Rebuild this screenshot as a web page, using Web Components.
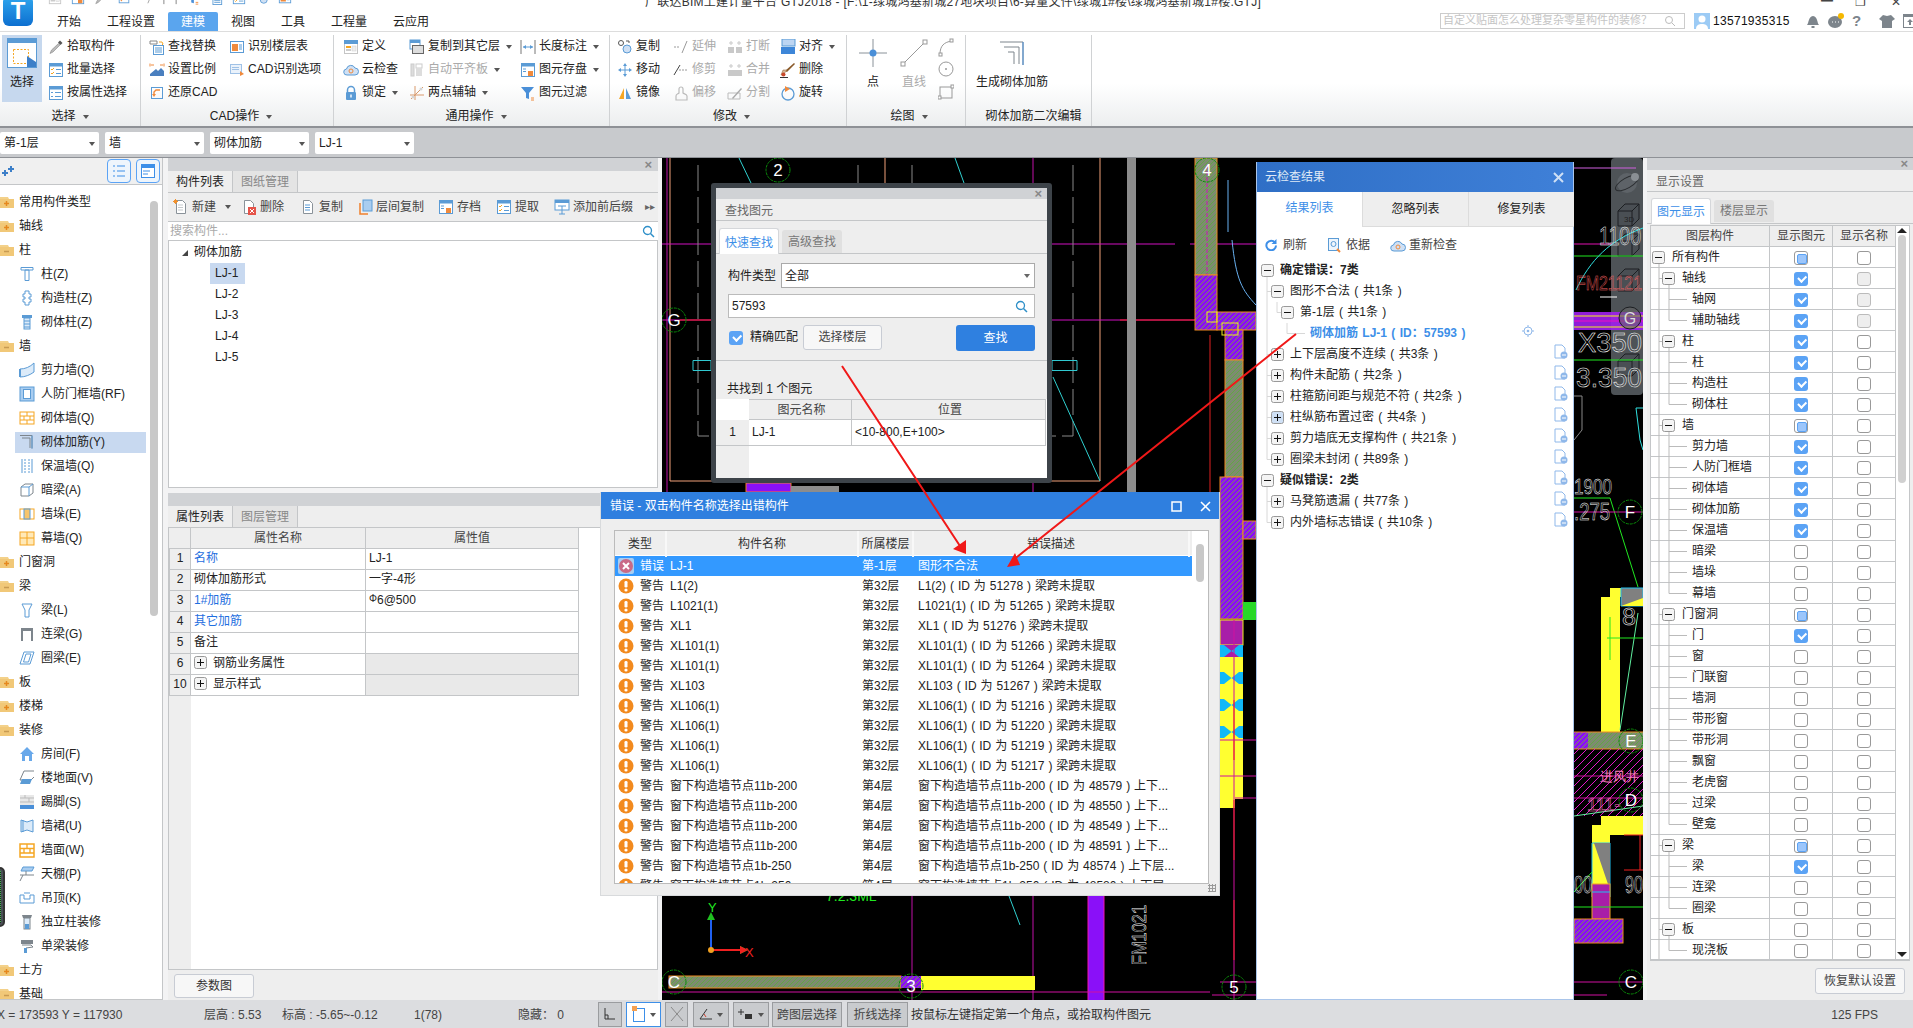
<!DOCTYPE html>
<html lang="zh">
<head>
<meta charset="utf-8">
<title>GTJ2018</title>
<style>
  html, body { margin: 0; height: 100%; overflow: hidden; background: #f3f3f4; }
  body { position: relative; font: 12px/1.2 "Liberation Sans", "Noto Sans CJK SC", sans-serif; color: #222; }
</style>
</head>
<body>
<gtj-app>
  <gtj-titlebar></gtj-titlebar>
  <gtj-ribbon></gtj-ribbon>
  <gtj-combos></gtj-combos>
  <gtj-main>
    <gtj-nav-tree></gtj-nav-tree>
    <gtj-mid-panel></gtj-mid-panel>
    <gtj-cad-view></gtj-cad-view>
    <gtj-display-panel></gtj-display-panel>
  </gtj-main>
  <gtj-status></gtj-status>
</gtj-app>
<gtj-find-dialog></gtj-find-dialog>
<gtj-cloud-panel></gtj-cloud-panel>
<gtj-error-dialog></gtj-error-dialog>
<gtj-arrows></gtj-arrows>

<script>
const B = '#5b9bd5', O = '#f5a623', G = '#9a9a9a';
const win = `<rect x="1.5" y="1.5" width="13" height="13" fill="#fff" stroke="${B}"/><rect x="1" y="1" width="14" height="3.5" fill="${B}"/>`;
const page = `<path d="M3.5 1.500h6l3 3v10h-9z" fill="#fff" stroke="#8a9299"/>`;
const I = {
  pick: `<path d="M12 1.5l2.5 2.5-2 2L10 3.5z" fill="#555"/><path d="M10.5 4.5l1.5 1.5L5 13l-3 1.5L3.5 11z" fill="#bbb" stroke="#777" stroke-width=".5"/>`,
  batch: `${win}<path d="M3 7l1 1 2-2M3 11l1 1 2-2" stroke="${O}" fill="none"/><path d="M8 7.5h5M8 11.5h5" stroke="${B}"/>`,
  attr: `${win}<path d="M3 7.5h2M7 7.5h6M3 11.5h2M7 11.5h6" stroke="${B}"/>`,
  find: `<path d="M1 2h7v3H1z" fill="#fff" stroke="#888"/><path d="M10 3h3l1 2-1 1" stroke="${O}" fill="none"/><rect x="4.5" y="6.5" width="10" height="9" fill="#fff" stroke="${B}"/><path d="M6 9h7M6 11h7M6 13h7" stroke="${B}"/>`,
  floor: `<rect x="1.5" y="2.5" width="13" height="11" fill="#fff" stroke="${B}"/><rect x="3" y="5" width="6" height="7" fill="#f08a3c"/><path d="M10 6h3M10 8h3M10 10h3" stroke="${B}"/>`,
  scale: `<path d="M1 14h14V9l-3-3-3 3-2-2-6 5z" fill="#4a7fbf"/><path d="M2 3h3M1 1.5v3M14 3h-3M15 1.5v3" stroke="#f08a3c"/>`,
  cadopt: `<rect x="1.5" y="2.5" width="11" height="9" fill="#eaf2fb" stroke="#9fc1e6"/><path d="M3 5.5h7M3 7.5h7" stroke="#9fc1e6"/><path d="M11 9l4 3-4 2z" fill="#f08a3c"/>`,
  restore: `<rect x="2.5" y="2.5" width="11" height="11" fill="none" stroke="${B}"/><path d="M11 5H7L5 7v3" stroke="#f08a3c" stroke-width="1.4" fill="none"/><path d="M3 9l2 3 2-3z" fill="#f08a3c"/>`,
  def: `<rect x="1.5" y="1.5" width="13" height="13" fill="#fff" stroke="#c5c5c5"/><rect x="1" y="1" width="14" height="4" fill="${B}"/><rect x="3" y="7" width="5" height="2" fill="${O}"/><rect x="3" y="10" width="5" height="2" fill="#ccc"/><rect x="9" y="7" width="4" height="5" fill="#eee" stroke="#ccc" stroke-width=".5"/>`,
  cloud: `<path d="M4 13a3 3 0 0 1-.5-6A4.500 4.500 0 0 1 12 6a3.500 3.500 0 0 1 0 7z" fill="#cfe0f4" stroke="${B}"/><circle cx="8" cy="9" r="2" fill="none" stroke="#f08a3c"/>`,
  lock: `<path d="M4.500 7V5a3.500 3.500 0 0 1 7 0v2" fill="none" stroke="${B}" stroke-width="1.500"/><rect x="3" y="7" width="10" height="8" rx="1" fill="${B}"/><rect x="7.300" y="9.500" width="1.400" height="3" fill="#fff"/>`,
  copyf: `<rect x="1" y="1" width="10" height="9" fill="#fff" stroke="${B}"/><rect x="1" y="1" width="10" height="3" fill="${B}"/><rect x="3.500" y="6.500" width="11" height="8" fill="#ddd" stroke="#666"/>`,
  align: `<rect x="2" y="2" width="3" height="12" fill="#ddd" stroke="#ccc"/><rect x="7" y="2" width="6" height="4" fill="none" stroke="#ccc"/><rect x="7" y="6" width="6" height="8" fill="#ddd"/>`,
  twop: `<path d="M2 14L14 2M6 1v14M1 10h14" stroke="#d99a6c" fill="none"/><circle cx="4" cy="12" r="1.500" fill="#d5d5d5"/><circle cx="12" cy="4" r="1.500" fill="#d5d5d5"/>`,
  dim: `<path d="M1 1v14M15 1v14" stroke="#777"/><path d="M3 8h10" stroke="${B}"/><path d="M3 8l3-2v4zM13 8l-3-2v4z" fill="${B}"/>`,
  save: `<rect x="1.500" y="1.500" width="13" height="13" fill="#fff" stroke="${B}"/><rect x="1" y="1" width="14" height="3.500" fill="${B}"/><path d="M3 7h3M3 9.500h3" stroke="${B}"/><rect x="8" y="9" width="5" height="5" fill="#f08a3c"/>`,
  filter: `<path d="M1 2h13l-5 6v6l-3-1V8z" fill="#4a8fd8"/><path d="M11 13h3M11 15h3" stroke="#f08a3c"/>`,
  copy: `<circle cx="4" cy="4" r="2.500" fill="none" stroke="#555"/><circle cx="10" cy="10" r="4" fill="#cfe0f4" stroke="${B}"/><path d="M9 2h3v2" stroke="#555" fill="none"/>`,
  move: `<path d="M8 1l2 3H6zM8 15l-2-3h4zM1 8l3-2v4zM15 8l-3 2V6z" fill="${B}"/><path d="M8 4v8M4 8h8" stroke="${B}"/>`,
  mirror: `<path d="M7 3v11H2z" fill="${O}"/><path d="M9 3v11h5z" fill="${B}"/>`,
  ext: `<path d="M1 8h6" stroke="${G}" stroke-dasharray="2 1"/><path d="M9 14l5-12" stroke="${G}"/>`,
  trim: `<path d="M1 13L7 3" stroke="#444"/><path d="M6 8h9" stroke="${G}" stroke-dasharray="2 1"/>`,
  off: `<path d="M3 15v-4c0-2 2-2 3-3V4a2 2 0 0 1 4 0v4c1 1 4 1 4 3v4z" fill="none" stroke="#bbb" stroke-width="1.200"/>`,
  brk: `<rect x="1" y="8" width="6" height="6" fill="#c9c9c9"/><rect x="9" y="8" width="6" height="6" fill="#c9c9c9"/><path d="M4 2v4M2 4h4M12 2v4M10 4h4" stroke="#c9c9c9"/>`,
  merge: `<rect x="1" y="8" width="14" height="6" fill="#c9c9c9"/><path d="M4 2v4M2 4h4M12 2v4M10 4h4" stroke="#c9c9c9"/>`,
  split: `<path d="M1 8h12v6H1z" fill="none" stroke="#bbb"/><path d="M5 13L14 3l1 1-9 10z" fill="#aaa"/>`,
  alignr: `<rect x="2" y="0" width="13" height="7" fill="#bcd5f2" stroke="${B}"/><rect x="1" y="8" width="14" height="7" fill="#3d86d8"/>`,
  del: `<path d="M14 1l1 1-8 8-2-1z" fill="#8a5a2a"/><path d="M7 8L3 13h-2l2-5z" fill="#d7b99a" stroke="#8a5a2a" stroke-width=".5"/><circle cx="3.500" cy="12.500" r="2" fill="#c9482a"/><path d="M0 15.500h8" stroke="#333"/>`,
  rot: `<circle cx="8" cy="9" r="6" fill="none" stroke="${B}" stroke-width="1.300"/><path d="M5 1l5 3-5 3z" fill="#f08a3c"/>`,
  pnew: `${page}<path d="M5 6h5M5 8.500h5M5 11h5" stroke="#c5c9cc"/><path d="M1 1l3 3M4 1L1 4M2.500 0v5M0 2.500h5" stroke="#f0902c"/>`,
  pdel: `${page}<rect x="7" y="8" width="8" height="8" fill="#e5544a"/><path d="M9 10l4 4M13 10l-4 4" stroke="#fff"/>`,
  pcopy: `${page}<path d="M5 6h5M5 8.500h5M5 11h5" stroke="${B}"/>`,
  lcopy: `<path d="M3 4v11h8" fill="none" stroke="#f0802c" stroke-width="1.500"/><rect x="6" y="1" width="9" height="11" fill="#a9cdf0" stroke="${B}"/>`,
  suffix: `<rect x="1" y="1" width="14" height="10" fill="#fff" stroke="${B}"/><rect x="1" y="1" width="14" height="3" fill="${B}"/><path d="M4 7h8M8 7v8M5 15h6" stroke="${B}"/>`
};
const ic = (n, s = 16) => `<svg width="${s}" height="${s}" viewBox="0 0 16 16" style="flex:none;display:block">${I[n] || ''}</svg>`;

const box = (x, y, plus, on) => `<rect x="${x + .5}" y="${y + .5}" width="12" height="12" rx="2" fill="${on ? '#cfe0f5' : '#f4f4f4'}" stroke="#999"/><path d="M${x + 3} ${y + 6.500}h7${plus ? `M${x + 6.500} ${y + 3}v7` : ''}" stroke="#111"/>`;

class GtjBase extends HTMLElement {
  constructor() {
    super();
    this.attachShadow({ mode: 'open' });
  }
  get css() { return ''; }
  get template() { return ''; }
  connectedCallback() {
    this.shadowRoot.innerHTML = `<style>* { box-sizing: border-box; } :host { display: block; box-sizing: border-box; flex: none; } ${GtjBase.shared} ${this.css}</style>${this.template}`;
  }
}
GtjBase.shared = `
  .strip { height: 12px; background: #d0d2d5; display: flex; justify-content: flex-end; align-items: center; padding-right: 5px; color: #888; font-size: 13px; font-weight: bold; }
  .ptitle { height: 22px; padding-left: 9px; line-height: 23px; color: #666; border-bottom: 1px solid #c4c6c8; background: #eee; }
  .tabs { display: flex; align-items: flex-end; background: #eee; border-bottom: 1px solid #c4c6c8; }
  .tab { height: 23px; width: 60px; line-height: 23px; text-align: center; color: #777; background: #e0e0e0; border-radius: 3px 3px 0 0; margin-left: 3px; }
  .tab.on { height: 26px; line-height: 26px; background: #fff; color: #3d8fe8; border: 1px solid #d5d7da; border-bottom: 0; margin-bottom: -1px; }
  .tick { width: 14px; height: 14px; border-radius: 3px; border: 1px solid #999; background: #fff; display: block; }
  .tick.c { background: #5ba3f5; border: 0; position: relative; }
  .tick.c::after { content: ""; position: absolute; left: 4px; top: 3px; width: 6px; height: 3.500px; border: solid #fff; border-width: 0 0 2px 2px; transform: rotate(-45deg); }
  .tick.p { background: #fff; padding: 2px; }
  .tick.p::after { content: ""; display: block; width: 100%; height: 100%; border-radius: 2px; background: #9cc6fb; border: 1px solid #5ba3f5; }
  .tick.d { background: #eee; border-color: #bbb; }
`;

class GtjApp extends GtjBase {
  get css() { return `:host { display: flex; flex-direction: column; height: 1028px; }`; }
  get template() { return `<slot></slot>`; }
}

class GtjTitlebar extends GtjBase {
  get css() {
    return `
      :host { height: 31px; background: #fff; position: relative; overflow: hidden; }
      .logo { position: absolute; left: 3px; top: -4px; width: 30px; height: 30px; border-radius: 6px; background: linear-gradient(#2fa7ee, #0d6fd0); color: #fff; font-weight: bold; font-size: 24px; line-height: 30px; text-align: center; }
      .top { height: 12px; display: flex; align-items: flex-start; padding-left: 48px; overflow: hidden; position: relative; }
      .qa { display: flex; gap: 9px; margin-top: -9px; }
      .title { position: absolute; left: 645px; top: -5px; white-space: nowrap; color: #333; letter-spacing: .25px; }
      .winb { position: absolute; top: -5px; color: #444; font-size: 12px; }
      .row { height: 19px; display: flex; padding-left: 44px; }
      .t { padding: 0 13px; height: 19px; line-height: 20px; }
      .t.on { background: #5aa5ee; color: #fff; border-radius: 2px 2px 0 0; }
      .right { position: absolute; left: 1440px; top: 12px; display: flex; align-items: center; }
      .search { width: 245px; height: 16px; border: 1px solid #ccc; overflow: hidden; color: #c4c4c4; font-size: 11px; line-height: 13px; padding-left: 2px; position: relative; }
      .search svg { position: absolute; right: 8px; top: 1px; }
      .num { margin-left: 3px; color: #111; font-size: 12px; width: 79px; letter-spacing: .3px; }
      .user { margin-left: 9px; }
      .tools { display: flex; gap: 8px; margin-left: 14px; align-items: center; }
    `;
  }
  get template() {
    return `
      <div class="logo">T</div>
      <div class="top">
        <div class="qa">${['def','save','pick','restore','ext','dim','filter','find','batch','copy','floor'].map(n => ic(n, 14)).join('')}</div>
        <span class="title">广联达BIM土建计量平台 GTJ2018 - [F:\\1-绿城鸿基新城27地块项目\\6-算量文件\\绿城1#楼\\绿城鸿基新城1#楼.GTJ]</span>
        <span class="winb" style="left:1821px">━</span><span class="winb" style="left:1855px">❐</span><span class="winb" style="left:1891px">✕</span>
      </div>
      <div class="row">
        <span class="t">开始</span><span class="t">工程设置</span><span class="t on">建模</span><span class="t">视图</span><span class="t">工具</span><span class="t">工程量</span><span class="t">云应用</span>
      </div>
      <div class="right">
        <div class="search">自定义贴面怎么处理复杂零星构件的装修？<svg width="12" height="12" viewBox="0 0 12 12"><circle cx="5" cy="5" r="3.500" fill="none" stroke="#bbb"/><path d="M8 8l3 3" stroke="#bbb"/></svg></div>
        <svg class="user" width="16" height="16" viewBox="0 0 16 16"><rect width="16" height="16" fill="#9ccbf5"/><circle cx="8" cy="6" r="3.500" fill="#fff"/><path d="M2 16c0-4 3-5 6-5s6 1 6 5z" fill="#fff"/></svg>
        <span class="num">13571935315</span>
        <div class="tools">
          <svg width="14" height="16" viewBox="0 0 14 16"><path d="M1 12c2-2 1-8 6-9 5 1 4 7 6 9z" fill="#7d858c"/><rect x="5.500" y="13" width="3" height="2" fill="#7d858c"/></svg>
          <svg width="16" height="16" viewBox="0 0 16 16"><ellipse cx="7" cy="9" rx="7" ry="6" fill="#7d858c"/><circle cx="13" cy="3" r="3" fill="#f5b800"/><path d="M4 9h1M7 9h1M10 9h1" stroke="#fff"/></svg>
          <span style="color:#7d858c;font-weight:bold;font-size:15px">?</span>
          <svg width="16" height="15" viewBox="0 0 16 15" style="margin-left:10px"><path d="M4 1l4 1 4-1 4 4-3 2v7H3V7L0 5z" fill="#7d858c"/></svg>
          <svg width="14" height="14" viewBox="0 0 14 14"><rect x=".5" y=".5" width="13" height="13" fill="#fff" stroke="#7d858c"/><rect width="14" height="3" fill="#7d858c"/><path d="M7 5l3 3H8v3H6V8H4z" fill="#7d858c"/></svg>
        </div>
      </div>
    `;
  }
}

class GtjRibItem extends GtjBase {
  get css() {
    return `
      :host { display: flex; align-items: center; height: 23px; white-space: nowrap; }
      :host([off]) { color: #aaa; }
      svg { margin-right: 3px; }
      .arr { margin-left: 6px; width: 0; height: 0; border: 3px solid transparent; border-top: 4px solid #555; margin-top: 3px; }
    `;
  }
  get template() {
    return `${ic(this.getAttribute('icon'))}<slot></slot>${this.hasAttribute('menu') ? '<i class="arr"></i>' : ''}`;
  }
}

class GtjRibBig extends GtjBase {
  get css() {
    return `
      :host { display: flex; flex-direction: column; align-items: center; height: 67px; padding-top: 3px; white-space: nowrap; }
      :host([on]) { background: #c6d8ee; }
      :host([off]) { color: #aaa; }
      span { margin-top: 7px; }
      ::slotted(svg) { display: block; }
    `;
  }
  get template() { return `<slot name="icon"></slot><span><slot></slot></span>`; }
}

class GtjRibGroup extends GtjBase {
  get css() {
    return `
      :host { display: flex; flex-direction: column; height: 91px; border-right: 1px solid #d0d2d4; }
      .body { height: 69px; display: flex; flex: none; }
      .lab { flex: 1; display: flex; align-items: center; justify-content: center; gap: 7px; padding-top: 2px; }
      .lab i { width: 0; height: 0; border: 3.500px solid transparent; border-top: 4px solid #555; margin-top: 4px; }
    `;
  }
  get template() {
    return `<div class="body"><slot></slot></div><div class="lab">${this.getAttribute('label')}${this.hasAttribute('plain') ? '' : '<i></i>'}</div>`;
  }
}

class GtjRibbon extends GtjBase {
  get css() {
    return `
      :host { height: 97px; padding-top: 3px; display: flex; align-items: flex-start; border-top: 1px solid #ddd; border-bottom: 2px solid #8e9196; background: linear-gradient(#fff 55%, #eceeef); }
      .col { display: flex; flex-direction: column; }
    `;
  }
  col(x, items) {
    return `<div class="col" style="width:${x}px">${items.map(([n, t, f]) => `<gtj-rib-item icon="${n}"${f && f.includes('m') ? ' menu' : ''}${f && f.includes('o') ? ' off' : ''}>${t}</gtj-rib-item>`).join('')}</div>`;
  }
  get template() {
    return `
      <gtj-rib-group label="选择" style="width:141px">
        <gtj-rib-big on style="width:40px;margin-left:2px;margin-right:6px"><svg slot="icon" width="30" height="30" viewBox="0 0 30 30"><rect x=".5" y=".5" width="29" height="29" fill="#fff" stroke="#5b9bd5"/><rect width="30" height="5" fill="#5b9bd5"/><rect x="6.500" y="11.500" width="15" height="14" fill="none" stroke="#f5a623" stroke-dasharray="2 1.500"/><path d="M20 18l9 6v5h-9z" fill="#3d7fc8"/></svg>选择</gtj-rib-big>
        ${this.col(92, [['pick', '拾取构件'], ['batch', '批量选择'], ['attr', '按属性选择']])}
      </gtj-rib-group>
      <gtj-rib-group label="CAD操作" style="width:193px;padding-left:8px">
        ${this.col(80, [['find', '查找替换'], ['scale', '设置比例'], ['restore', '还原CAD']])}
        ${this.col(100, [['floor', '识别楼层表'], ['cadopt', 'CAD识别选项']])}
      </gtj-rib-group>
      <gtj-rib-group label="通用操作" style="width:276px;padding-left:9px">
        ${this.col(66, [['def', '定义'], ['cloud', '云检查'], ['lock', '锁定', 'm']])}
        ${this.col(111, [['copyf', '复制到其它层', 'm'], ['align', '自动平齐板', 'mo'], ['twop', '两点辅轴', 'm']])}
        ${this.col(86, [['dim', '长度标注', 'm'], ['save', '图元存盘', 'm'], ['filter', '图元过滤']])}
      </gtj-rib-group>
      <gtj-rib-group label="修改" style="width:237px;padding-left:7px">
        ${this.col(56, [['copy', '复制'], ['move', '移动'], ['mirror', '镜像']])}
        ${this.col(54, [['ext', '延伸', 'o'], ['trim', '修剪', 'o'], ['off', '偏移', 'o']])}
        ${this.col(53, [['brk', '打断', 'o'], ['merge', '合并', 'o'], ['split', '分割', 'o']])}
        ${this.col(64, [['alignr', '对齐', 'm'], ['del', '删除'], ['rot', '旋转']])}
      </gtj-rib-group>
      <gtj-rib-group label="绘图" style="width:119px;padding-left:6px">
        <gtj-rib-big style="width:40px"><svg slot="icon" width="30" height="30" viewBox="0 0 30 30"><path d="M15 1v28M1 15h28" stroke="#8a9299"/><circle cx="15" cy="15" r="3.500" fill="#4a8fd8"/></svg>点</gtj-rib-big>
        <gtj-rib-big off style="width:42px"><svg slot="icon" width="30" height="30" viewBox="0 0 30 30"><path d="M4 26L26 4" stroke="#999"/><rect x="2" y="24" width="4" height="4" fill="#fff" stroke="#999"/><rect x="24" y="2" width="4" height="4" fill="#fff" stroke="#999"/></svg>直线</gtj-rib-big>
        <div class="col" style="width:16px;margin-left:3px">
          <svg width="16" height="23" viewBox="0 0 16 23"><path d="M2 19c0-8 4-12 12-13" fill="none" stroke="#999"/><rect x="1" y="18" width="3" height="3" fill="#fff" stroke="#999"/><rect x="12" y="4" width="3" height="3" fill="#fff" stroke="#999"/></svg>
          <svg width="16" height="23" viewBox="0 0 16 23"><circle cx="8" cy="11" r="7" fill="none" stroke="#999"/><circle cx="8" cy="11" r="1" fill="#999"/></svg>
          <svg width="16" height="23" viewBox="0 0 16 23"><rect x="2" y="6" width="12" height="11" fill="none" stroke="#999"/><rect x="0" y="15" width="3" height="3" fill="#fff" stroke="#999"/><rect x="13" y="4" width="3" height="3" fill="#fff" stroke="#999"/></svg>
        </div>
      </gtj-rib-group>
      <gtj-rib-group label="砌体加筋二次编辑" plain style="width:126px;padding-left:10px">
        <gtj-rib-big style="width:72px"><svg slot="icon" width="30" height="30" viewBox="0 0 30 30"><path d="M3 4h23v23M7 9h15v17M11 14h6v12" fill="none" stroke="#7d858c"/><path d="M26 4v23" stroke="#4a8fd8"/></svg>生成砌体加筋</gtj-rib-big>
      </gtj-rib-group>
    `;
  }
}

class GtjCombos extends GtjBase {
  get css() {
    return `
      :host { height: 30px; background: #c8cacd; border-bottom: 1px solid #8e9196; display: flex; padding-top: 4px; }
      div { height: 22px; width: 99px; background: #fff; border-radius: 2px; margin-right: 6px; line-height: 22px; padding-left: 4px; position: relative; }
      div::after { content: ""; position: absolute; right: 4px; top: 10px; border: 3px solid transparent; border-top: 4px solid #555; }
      div:first-child { width: 97px; margin-left: 0; margin-right: 5px; padding-left: 1px; }
    `;
  }
  get template() { return `<div>第-1层</div><div>墙</div><div>砌体加筋</div><div>LJ-1</div>`; }
}

class GtjMain extends GtjBase {
  get css() { return `:host { height: 842px; display: flex; background: #f3f3f4; gap: 0; }`; }
  get template() { return `<slot></slot>`; }
}

const L = {
  col: `<path d="M2 1.500h12v2.500H2zM6 4h4v10.500H6z" fill="#fff" stroke="${B}"/>`,
  gzz: `<path d="M6 1h4v3h2v3h-2v2h2v3h-2v3H6v-3H4V9h2V7H4V4h2z" fill="#fff" stroke="${B}"/>`,
  qtz: `<rect x="3" y="1" width="10" height="3" fill="${B}"/><rect x="5" y="4" width="6" height="11" fill="#dcebf9" stroke="${B}"/><path d="M5 7h6M5 10h6M5 13h6" stroke="${B}"/>`,
  jlq: `<path d="M1 7c5 0 10-2 14-6v9c-4 3-9 5-14 5z" fill="#dcebf9" stroke="${B}"/><path d="M1 7v8" stroke="${B}" stroke-width="2"/>`,
  rfq: `<rect x="1" y="1" width="14" height="14" fill="#a9cdf0" stroke="${B}"/><rect x="4.500" y="3.500" width="7" height="9" fill="#fff" stroke="${B}"/>`,
  qtq: `<rect x="1" y="2" width="14" height="12" fill="#fff" stroke="${O}"/><path d="M1 6h14M1 10h14M8 2v4M5 6v4M11 6v4M8 10v4" stroke="${O}"/>`,
  jj: `<path d="M1 1.500h12v13M3 4h8v10M1 1.500v0" fill="none" stroke="#7d858c"/><path d="M13 1.500v13" stroke="${B}"/>`,
  bwq: `<path d="M3 1v14M13 1v14" stroke="${B}"/><path d="M6 1v14M10 1v14" stroke="${B}" stroke-dasharray="2 1"/>`,
  al: `<path d="M2 5l4-3h8v9l-4 3H2z" fill="#fff" stroke="#7d858c"/><path d="M2 5h8v9M10 5l4-3" fill="none" stroke="${B}"/>`,
  qd: `<rect x="1" y="3" width="14" height="10" fill="#fff" stroke="${O}"/><rect x="5" y="3" width="6" height="10" fill="#f7c56b" stroke="${B}"/>`,
  mq: `<rect x="1" y="2" width="14" height="13" fill="#ffe9b8" stroke="${O}"/><path d="M1 8h14M8 2v13" stroke="${O}"/>`,
  ll: `<path d="M3 2h10l-3 6v7H6V8z" fill="#fff" stroke="${B}"/>`,
  lg: `<path d="M2 2h12v3H2z" fill="#7d858c"/><path d="M3 5v10M13 5v10" stroke="#7d858c" stroke-width="2"/>`,
  ql: `<path d="M5 2h10l-4 12H1z" fill="#fff" stroke="${B}"/><path d="M7 4h5l-2.500 8H4.500z" fill="none" stroke="${B}"/>`,
  fj: `<path d="M8 1L1 8h2v7h3v-5h4v5h3V8h2z" fill="#68a8ea"/>`,
  ldm: `<path d="M5 1h10M5 1L1 10h11l3-3" fill="none" stroke="#7d858c"/><path d="M3 9h10l-2 5H1z" fill="${B}"/>`,
  tj: `<path d="M1 1h14v10H1z" fill="#e8e8e8"/><path d="M1 4h14M1 8h14M6 1v3M10 4v4" stroke="#bbb"/><rect x="1" y="11" width="14" height="4" fill="#4a8fd8"/>`,
  qq: `<path d="M2 2l6 2 6-2v12l-6-2-6 2z" fill="#dcebf9" stroke="${B}"/><path d="M4 2v12" stroke="${B}"/>`,
  qm: `<rect x="1" y="2" width="14" height="13" fill="#fff" stroke="${O}" stroke-width="1.500"/><path d="M1 6.500h14M1 11h14M8 2v4.500M5 6.500V11M11 6.500V11" stroke="${O}" stroke-width="1.300"/>`,
  tp: `<path d="M4 1h11l-2 4H2z" fill="#a9cdf0" stroke="${B}"/><path d="M1 9h14M1 15l3-6M7 5v4" stroke="#7d858c" fill="none"/>`,
  dd: `<path d="M1 5v8h14V5h-4v4H5V5z" fill="#fff" stroke="${B}"/><path d="M5 3h6" stroke="${B}"/>`,
  dlz: `<path d="M3 1h10l-1 3H4z" fill="#7d858c"/><rect x="5" y="4" width="6" height="11" fill="#dcebf9" stroke="#7d858c"/><rect x="6" y="10" width="4" height="5" fill="${B}"/>`,
  dl: `<path d="M2 2h12v4H2z" fill="#7d858c"/><path d="M3 7h9l2 2-7 1v5" fill="none" stroke="#7d858c"/><rect x="5" y="10" width="3" height="5" fill="${B}"/>`
};
const folder = open => `<svg width="15" height="16" viewBox="0 0 15 16" style="display:block;flex:none;margin-left:-1px"><path d="M0 3h9l1 2h5v9H0z" fill="#f3d18a"/><rect x="0" y="5" width="15" height="9" fill="#f1c878"/><path d="M5 9.500h5${open ? '' : 'M7.500 7v5'}" stroke="${open ? '#c89b52' : '#e5881e'}" stroke-width="1.500"/></svg>`;

class GtjNavTree extends GtjBase {
  get css() {
    return `
      :host { width: 163px; height: 842px; background: #fff; border-right: 1px solid #c4c6c8; border-bottom: 1px solid #c4c6c8; overflow: hidden; position: relative; }
      .head { height: 27px; background: #f0f0f0; border-bottom: 1px solid #c4c6c8; position: relative; display: flex; align-items: center; padding-left: 1px; }
      .hb { width: 24px; height: 24px; border: 1px solid #5ba3f5; border-radius: 4px; background: #eef5fc; display: flex; align-items: center; justify-content: center; margin-left: 5px; }
      .r { height: 24px; display: flex; align-items: center; }
      .r.g { gap: 5px; }
      .r.c { padding-left: 19px; gap: 6px; }
      .r.sel { background: linear-gradient(#c8d9f0, #c8d9f0) 15px 1.500px / 131px 21px no-repeat; }
      .thumb { position: absolute; left: 150px; top: 43px; width: 8px; height: 415px; border-radius: 4px; background: #c8c8c8; }
      .widget { position: absolute; left: -6px; top: 709px; width: 11px; height: 60px; border-radius: 5px; background: #4a5056; border: 2px solid #333; }
      .widget::after { content: ""; position: absolute; inset: 2px; background: repeating-linear-gradient(#3fb24f 0 1px, #222 1px 2px); }
      .list { padding-top: 5px; }
    `;
  }
  get template() {
    const rows = [
      ['g', '常用构件类型'], ['g', '轴线'], ['o', '柱'], ['col', '柱(Z)'], ['gzz', '构造柱(Z)'], ['qtz', '砌体柱(Z)'],
      ['o', '墙'], ['jlq', '剪力墙(Q)'], ['rfq', '人防门框墙(RF)'], ['qtq', '砌体墙(Q)'], ['jj', '砌体加筋(Y)', 1], ['bwq', '保温墙(Q)'],
      ['al', '暗梁(A)'], ['qd', '墙垛(E)'], ['mq', '幕墙(Q)'], ['g', '门窗洞'], ['o', '梁'], ['ll', '梁(L)'], ['lg', '连梁(G)'], ['ql', '圈梁(E)'],
      ['g', '板'], ['g', '楼梯'], ['o', '装修'], ['fj', '房间(F)'], ['ldm', '楼地面(V)'], ['tj', '踢脚(S)'], ['qq', '墙裙(U)'], ['qm', '墙面(W)'],
      ['tp', '天棚(P)'], ['dd', '吊顶(K)'], ['dlz', '独立柱装修'], ['dl', '单梁装修'], ['g', '土方'], ['o', '基础']
    ];
    return `
      <div class="head">
        <svg width="14" height="14" viewBox="0 0 14 14"><path d="M4 6v6M1 9h6M10 2v6M7 5h6" stroke="#3d7fc8" stroke-width="2"/></svg>
        <span style="flex:1"></span>
        <div class="hb"><svg width="14" height="14" viewBox="0 0 14 14"><path d="M1 2h2M5 2h8M1 7h2M5 7h8M1 12h2M5 12h8" stroke="#3d8fe8"/></svg></div>
        <div class="hb" style="margin-right:2px"><svg width="14" height="14" viewBox="0 0 14 14"><rect x=".5" y=".5" width="13" height="13" fill="#fff" stroke="#3d8fe8"/><rect width="14" height="4" fill="#3d8fe8"/><path d="M2 7h7M2 10h5" stroke="#3d8fe8"/></svg></div>
      </div>
      <div class="list">${rows.map(([k, t, s]) => k == 'g' || k == 'o'
        ? `<div class="r g">${folder(k == 'o')}<span>${t}</span></div>`
        : `<div class="r c${s ? ' sel' : ''}"><svg width="16" height="16" viewBox="0 0 16 16" style="flex:none">${L[k]}</svg><span>${t}</span></div>`).join('')}</div>
      <div class="thumb"></div>
      <div class="widget"></div>
    `;
  }
}

class GtjMidPanel extends GtjBase {
  get css() {
    return `
      :host { width: 490px; margin-left: 5px; height: 842px; display: flex; flex-direction: column; background: #eee; }
      .tabs { height: 22px; align-items: stretch; flex: none; }
      .tb { width: 65px; line-height: 22px; text-align: center; border-right: 1px solid #c4c6c8; }
      .tb.on { color: #222; background: #eee; }
      .tb.off { color: #888; background: #e4e4e4; }
      .tool { height: 29px; flex: none; display: grid; grid-template-columns: 68px 59px 57px 81px 58px 58px 90px 1fr; padding-left: 5px; align-items: center; border-bottom: 1px solid #c4c6c8; color: #444; }
      .tool div { display: flex; align-items: center; gap: 3px; white-space: nowrap; }
      .tool i { border: 3px solid transparent; border-top: 4px solid #555; margin: 3px 0 0 6px; }
      .sb { height: 19px; flex: none; background: #fff; border-bottom: 1px solid #c4c6c8; padding: 0 3px 0 2px; color: #aaa; line-height: 18px; display: flex; justify-content: space-between; align-items: center; }
      .tree { height: 247px; flex: none; background: #fff; border: 1px solid #c4c6c8; border-top: 0; padding-top: 1px; }
      .tree div { height: 21px; line-height: 21px; }
      .tree .top { padding-left: 25px; position: relative; }
      .tree .top::before { content: ""; position: absolute; left: 13px; top: 8px; border: solid transparent; border-width: 0 0 6px 6px; border-bottom-color: #444; }
      .tree .lj { margin-left: 41px; width: 35px; padding-left: 5px; }
      .tree .sel { background: #c8d9f0; }
      .gap { height: 5px; flex: none; background: #f3f3f4; }
      .props { flex: none; height: 442px; background: linear-gradient(90deg, #eee 22px, #fff 22px); border: 1px solid #c4c6c8; border-top: 0; width: 490px; }
      table { border-collapse: collapse; table-layout: fixed; width: 410px; }
      th, td { height: 21px; padding: 0 3px; border: 1px solid #c4c6c8; font-weight: normal; text-align: left; white-space: nowrap; }
      tr:first-child th { border-top: 0; height: 20px; text-align: center; background: #eee; color: #444; }
      tr:first-child th:first-child { border: 0; }
      td:first-child { text-align: center; padding: 0; background: #eee; font-size: 12px; }
      td.g { background: #e9e9e9; }
      a { color: #1f6fe0; }
      .pm { display: inline-block; vertical-align: -2px; margin-right: 6px; }
      .phi { font-size: 10px; position: relative; top: -2px; }
      .foot { flex: 1; padding: 4px 6px; }
      .btn { width: 80px; height: 24px; border: 1px solid #c8ccd4; border-radius: 3px; background: #f7f7f7; text-align: center; line-height: 22px; color: #333; }
    `;
  }
  get template() {
    const t = (n, s, m) => `<div>${ic(n)}<span>${s}</span>${m ? '<i></i>' : ''}</div>`;
    const plus = `<svg class="pm" width="13" height="13" viewBox="0 0 13 13">${box(0, 0, 1)}</svg>`;
    return `
      <div class="strip" style="padding-right:6px;flex:none;height:13px">×</div>
      <div class="tabs"><div class="tb on">构件列表</div><div class="tb off">图纸管理</div></div>
      <div class="tool">
        ${t('pnew', '新建', 1)}${t('pdel', '删除')}${t('pcopy', '复制')}${t('lcopy', '层间复制')}${t('save', '存档')}${t('batch', '提取')}${t('suffix', '添加前后缀')}
        <div style="color:#666;font-size:10px;justify-content:flex-end;padding-right:3px;margin-left:-16px">▸▸</div>
      </div>
      <div class="sb"><span>搜索构件...</span><svg width="13" height="13" viewBox="0 0 13 13"><circle cx="5.500" cy="5.500" r="4" fill="none" stroke="#2e8fc8" stroke-width="1.300"/><path d="M8.500 8.500l3.500 3.500" stroke="#2e8fc8" stroke-width="1.500"/></svg></div>
      <div class="tree">
        <div class="top">砌体加筋</div>
        <div class="lj sel">LJ-1</div><div class="lj">LJ-2</div><div class="lj">LJ-3</div><div class="lj">LJ-4</div><div class="lj">LJ-5</div>
      </div>
      <div class="gap"></div>
      <div class="strip" style="padding-right:6px;flex:none;height:13px"></div>
      <div class="tabs"><div class="tb on">属性列表</div><div class="tb off">图层管理</div></div>
      <div class="props">
        <table>
          <colgroup><col style="width:21px"><col style="width:175px"><col style="width:213px"></colgroup>
          <tr><th></th><th>属性名称</th><th>属性值</th></tr>
          <tr><td>1</td><td><a>名称</a></td><td>LJ-1</td></tr>
          <tr><td>2</td><td>砌体加筋形式</td><td>一字-4形</td></tr>
          <tr><td>3</td><td><a>1#加筋</a></td><td><span class="phi">Φ</span>6@500</td></tr>
          <tr><td>4</td><td><a>其它加筋</a></td><td></td></tr>
          <tr><td>5</td><td>备注</td><td></td></tr>
          <tr><td>6</td><td>${plus}钢筋业务属性</td><td class="g"></td></tr>
          <tr><td>10</td><td>${plus}显示样式</td><td class="g"></td></tr>
        </table>
      </div>
      <div class="foot"><div class="btn">参数图</div></div>
    `;
  }
}

class GtjCadView extends GtjBase {
  get css() {
    return `
      :host { width: 981px; height: 842px; margin-left: 4px; background: #000; overflow: hidden; }
      svg { display: block; }
      text { font-family: "Liberation Sans", sans-serif; }
    `;
  }
  axis(x, y, t) {
    return `<circle cx="${x}" cy="${y}" r="12" fill="none" stroke="#0a8a0a" stroke-dasharray="3 1"/><text x="${x}" y="${y + 6}" font-size="17" text-anchor="middle" fill="#fff">${t}</text>`;
  }
  cube(y) {
    return `<path d="M1618 ${y - 4}l7-7h14v15l-7 7h-14zM1618 ${y - 4}h14v15M1632 ${y - 4}l7-7" fill="#4a4f54" stroke="#1c1f22"/>`;
  }
  get template() {
    const dim = (x, y, s, size, len) => `<text x="${x}" y="${y}" font-size="${size}" fill="none" stroke="#fff" stroke-width=".5" textLength="${len}" lengthAdjust="spacingAndGlyphs">${s}</text>`;
    return `<svg width="981" height="842" viewBox="662 158 981 842">
      <defs>
        <pattern id="pu" width="5" height="5" patternUnits="userSpaceOnUse"><rect width="5" height="5" fill="#8a12f2"/><path d="M0 5L5 0" stroke="#7fa838" stroke-width=".8"/></pattern>
        <pattern id="gr" width="5" height="5" patternUnits="userSpaceOnUse"><rect width="5" height="5" fill="#7d8c70"/><path d="M0 5L5 0" stroke="#58b030" stroke-width=".7"/></pattern>
        <pattern id="mg" width="8" height="8" patternUnits="userSpaceOnUse"><path d="M0 8L8 0" stroke="#e018c8"/></pattern>
      </defs>
      <g fill="none">
        <path d="M670 158V481H1100V158M885 158V183" stroke="#f0a078"/>
        <path d="M667 158V500M1033 158V183M1033 483V492M912 896V1000M1033 896V1000" stroke="#c010a8"/>
        <path d="M662 244H1175M1190 244H1256" stroke="#d010c0"/>
        <path d="M662 320H1256" stroke="#d010c0"/><path d="M680 320H711M1120 320H1200" stroke="#f02020"/>
        <path d="M698 165V436H711M1073 165V436H1052M858 165V183M912 165V183" stroke="#888" stroke-dasharray="26 6"/>
        <path d="M693 360.500H711V370.500H693ZM1052 360.500H1077V370.500H1052Z" stroke="#30c8d0"/>
        <path d="M739 158L751 183M955 158L964 183M1053 377L1100 481" stroke="#30d0d0"/>
        <path d="M1228 180V232M1232 240C1236 280 1242 290 1256 305" stroke="#68b0f0"/>
      </g>
      <rect x="1127" y="158" width="9" height="334" fill="#8c8c8c"/>
      <rect x="746" y="483" width="45" height="9" fill="#8a10f8" stroke="#f08020"/><rect x="791" y="486" width="48" height="6" fill="#8c8c8c"/>
      ${this.axis(778, 170, '2')}${this.axis(674, 320, 'G')}
      <rect x="1195" y="158" width="22" height="117" fill="url(#gr)" stroke="#f08a20"/>
      <path d="M1207 165V275" stroke="#d010c0" stroke-dasharray="4 2"/>
      <rect x="1195" y="275" width="22" height="55" fill="url(#pu)" stroke="#f08a20"/>
      <rect x="1217" y="312" width="39" height="18" fill="url(#pu)" stroke="#f08a20"/>
      <rect x="1207" y="312" width="10" height="10" fill="none" stroke="#f0f020"/>
      <rect x="1225" y="330" width="18" height="30" fill="url(#pu)" stroke="#f08a20"/>
      <rect x="1225" y="360" width="18" height="117" fill="url(#gr)" stroke="#f08a20"/>
      <rect x="1220" y="477" width="23" height="142" fill="url(#pu)" stroke="#f08a20"/>
      <rect x="1222" y="323" width="16" height="12" fill="none" stroke="#f0f020"/>
      <path d="M1210 335V492" stroke="#e02020"/>
      ${this.axis(1207, 170, '4')}
      <rect x="1243" y="521" width="13" height="18" fill="url(#pu)" stroke="#f08a20"/>
      <rect x="1243" y="602" width="13" height="18" fill="#28d828"/>
      <rect x="1220" y="620" width="23" height="25" fill="#a81ea8" stroke="#f0f020"/>
      <rect x="1220" y="645" width="23" height="154" fill="#ffff30"/>
      <rect x="1220" y="799" width="15" height="9" fill="#ffff30"/>
      ${[645, 672, 699, 726].map(y => `<rect x="1220" y="${y}" width="23" height="12" fill="#10b8f8"/><path d="M1224 ${y + 12}h15l-7.500-6zM1224 ${y}h15l-7.500 6z" fill="${y == 645 ? '#a81ea8' : '#ffff30'}"/>`).join('')}
      <path d="M1234 620V1000" stroke="#d010a0"/><path d="M1234 700V990" stroke="#f02020" stroke-dasharray="60 40"/>
      <path d="M1220 740H1256M1220 776H1256M1235 798H1256M1220 982H1256M1212 995H1256" stroke="#d010a0"/>
      ${this.axis(1234, 987, '5')}
      <!-- view cube strip -->
      <rect x="1611" y="158" width="32" height="237" rx="4" fill="#5c6166" fill-opacity=".85"/>
      <circle cx="1627" cy="183" r="10" fill="#5e6368"/><ellipse cx="1627" cy="183" rx="13" ry="5" fill="none" stroke="#2a2d30" transform="rotate(-30 1627 183)"/><circle cx="1635" cy="177" r="4" fill="#8a8f94"/>
      ${this.cube(215)}${this.cube(245)}${this.cube(280)}${this.cube(365)}
      <text x="1624" y="222" font-size="8" fill="#222">3D</text>
      <!-- right side of the drawing -->
      <path d="M1574 168H1636" stroke="#d060e0"/><path d="M1574 244H1612" stroke="#e010b0"/><path d="M1574 256H1643" stroke="#20e820"/>
      <path d="M1576 290C1590 260 1610 240 1643 228" stroke="#30e0e0" fill="none"/>
      <rect x="1574" y="312" width="69" height="18" fill="#a020f0" fill-opacity=".9"/><path d="M1574 316H1643M1574 327H1643" stroke="#f0f020"/><path d="M1574 321H1643" stroke="#f010c0"/>
      <path d="M1600 297H1617" stroke="#fff"/>
      <path d="M1574 360H1643" stroke="#20e820"/><path d="M1574 396H1582V430L1574 440" stroke="#888" fill="none"/>
      <path d="M1636 408H1643M1636 408L1640 440L1643 450" stroke="#30e0e0" fill="none"/>
      <path d="M1574 498H1610L1638 587" stroke="#20e820" fill="none"/><path d="M1574 512H1643" stroke="#d010a0"/>
      <rect x="1610" y="588" width="11" height="9" fill="#ffff30"/><rect x="1601" y="597" width="19" height="135" fill="#ffff30"/>
      <path d="M1621 588H1643V606H1621Z" fill="#808080" stroke="#20c0f0"/><path d="M1621 606L1643 598V606Z" fill="#ffff30"/>
      <path d="M1638 613L1620 730" stroke="#60f0a0" fill="none"/><path d="M1610 617V660M1607 638H1643" stroke="#20e820"/>
      <rect x="1574" y="732" width="14" height="17" fill="url(#pu)"/><rect x="1588" y="732" width="55" height="17" fill="url(#gr)"/><path d="M1574 732H1643M1574 749H1643" stroke="#f08a20"/>
      <rect x="1574" y="749" width="69" height="67" fill="url(#mg)"/><path d="M1574 776H1643M1574 798H1643" stroke="#d010a0"/>
      <rect x="1601" y="816" width="42" height="19" fill="#ffff30"/><rect x="1592" y="825" width="18" height="18" fill="#ffff30"/>
      <path d="M1592 843H1610L1610 897H1592Z" fill="#ffff30" stroke="#20c0f0"/><path d="M1594 843H1610V890Z" fill="#808080"/>
      <rect x="1592" y="884" width="18" height="35" fill="#a81ea8" stroke="#f0a020"/><path d="M1592 892H1610" stroke="#20c0f0"/>
      <rect x="1574" y="919" width="49" height="24" fill="url(#pu)" stroke="#f08a20"/>
      <path d="M1574 907H1643" stroke="#20e820"/><path d="M1574 892L1592 872" stroke="#20e820"/>
      <path d="M1624 835H1643M1640 835V870M1624 870H1643" stroke="#f02020"/>
      <path d="M1574 982H1643M1574 995H1607" stroke="#d010a0"/>
      <path d="M1574 816L1643 806" stroke="#60f0a0"/>
      ${dim(1599, 245, '1100', 26, 42)}
      <text x="1576" y="290" font-size="21" fill="none" stroke="#f06060" stroke-width=".5" textLength="66" lengthAdjust="spacingAndGlyphs">FM21121</text>
      ${dim(1578, 352, 'X350', 28, 64)}${dim(1576, 387, '3.350', 28, 66)}${dim(1574, 494, '1900', 22, 38)}${dim(1574, 520, '.275', 24, 36)}
      ${dim(1622, 625, '8', 24, 14)}${dim(1574, 893, '00', 24, 18)}${dim(1625, 893, '90', 24, 18)}
      <text x="1600" y="781" font-size="13" fill="#ff80c0">进风井</text>
      <text x="1587" y="811" font-size="18" fill="none" stroke="#ff80c0" stroke-width=".5">111-</text>
      ${this.axis(1630, 512, 'F')}${this.axis(1631, 741, 'E')}${this.axis(1631, 800, 'D')}${this.axis(1631, 982, 'C')}
      <circle cx="1630" cy="318" r="11" fill="#666" fill-opacity=".6" stroke="#1c1f22"/><text x="1630" y="324" font-size="16" text-anchor="middle" fill="#ddd">G</text>
      <!-- below the error dialog -->
      <rect x="669" y="976" width="232" height="12" fill="url(#gr)" stroke="#f08a20"/><rect x="901" y="976" width="20" height="12" fill="url(#pu)"/>
      <rect x="921" y="976" width="114" height="14" fill="#ffff30"/><rect x="1088" y="896" width="16" height="104" fill="#8a10f8"/><path d="M1088 896V1000M1104 896V1000" stroke="#f010b0"/>
      <path d="M662 992H1210" stroke="#d010a0"/><path d="M1009 896L1020 925" stroke="#30d0d0"/>
      <text x="826" y="901" font-size="14" fill="#20e820">7.2.3ML</text>
      <text font-size="20" fill="none" stroke="#fff" stroke-width=".5" transform="translate(1146 965) rotate(-90)" textLength="60" lengthAdjust="spacingAndGlyphs">FM1021</text>
      <path d="M711 950V917" stroke="#2060f0" stroke-width="2"/><path d="M711 950H742" stroke="#f02020" stroke-width="2"/>
      <path d="M707 920L711 912L715 920ZM740 946L748 950L740 954Z" fill="#20c020"/><path d="M740 946L748 950L740 954Z" fill="#f02020"/>
      <circle cx="711" cy="950" r="3" fill="#f0a020"/>
      <text x="708" y="912" font-size="13" fill="#20e820">Y</text><text x="745" y="957" font-size="13" fill="#f02020">X</text>
      ${this.axis(674, 982, 'C')}${this.axis(911, 986, '3')}
    </svg>`;
  }
}

class GtjDisplayPanel extends GtjBase {
  get css() {
    return `
      :host { width: 266px; margin-left: 4px; background: #eee; height: 842px; display: flex; flex-direction: column; position: relative; }
      .strip, .ptitle { flex: none; }
      .ptitle { line-height: 25px; }
      .tabs { height: 32px; padding-left: 1px; flex: none; }
      .tab { height: 22px; line-height: 23px; margin-bottom: 1px; }
      .tab.on { height: 26px; line-height: 27px; }
      .grid { flex: none; margin: 1px 0 0 3px; width: 260px; height: 736px; background: #fff; border: 1px solid #c4c6c8; border-bottom: 2px solid #c4c6c8; overflow: hidden; position: relative; }
      .r { display: grid; grid-template-columns: 119px 63px 63px; width: 245px; height: 21px; border-bottom: 1px solid #c4c6c8; }
      .r > div { border-right: 1px solid #c4c6c8; display: flex; align-items: center; justify-content: center; }
      .r > div:first-child { justify-content: flex-start; white-space: nowrap; }
      .r.h { height: 21px; background: #eee; color: #444; }
      .r.h > div:first-child { justify-content: center; }
      .r svg { display: block; flex: none; }
      .sb { position: absolute; right: 0; top: 0; bottom: 0; width: 14px; }
      .sb b { position: absolute; left: 3px; top: 9px; width: 8px; height: 248px; border-radius: 4px; background: #d0d0d0; }
      .sb i { position: absolute; left: 2px; border: 5px solid transparent; }
      .sb i.u { top: 0; border-bottom: 5px solid #222; border-top: 0; margin-top: 2px; }
      .sb i.d { bottom: 2px; border-top: 5px solid #222; border-bottom: 0; }
      .foot { flex: 1; display: flex; justify-content: flex-end; padding: 7px 8px 0 0; }
      .btn { width: 90px; height: 26px; border: 1px solid #c8ccd4; border-radius: 3px; background: #f7f7f7; text-align: center; line-height: 24px; color: #444; }
    `;
  }
  lines(lv, last, lastGroup, kid) {
    // x is measured from the left edge of the first column
    let p = '', b = '';
    if (lv == 0) { p += 'M8 14V21'; b = box(1, 4, 0); }
    if (lv == 1) { p += `M8 0V${lastGroup ? 10 : 21}M8 10.500H11M18 14V21`; b = box(11, 4, kid == '+'); }
    if (lv == 2) { p += `M8 0V21M18 0V${last ? 10.500 : 21}M18 10.500H36`; }
    const w = lv == 0 ? 21 : lv == 1 ? 31 : 41;
    return `<svg width="${w}" height="21" viewBox="0 0 ${w} 21"><path d="${p}" fill="none" stroke="#bbb"/>${b}</svg>`;
  }
  get template() {
    const data = `0|所有构件|p|;1|轴线|c|d;2|轴网|c|d;2|辅助轴线|c|d;1|柱|c|;2|柱|c|;2|构造柱|c|;2|砌体柱|c|;1|墙|p|;2|剪力墙|c|;2|人防门框墙|c|;2|砌体墙|c|;2|砌体加筋|c|;2|保温墙|c|;2|暗梁||;2|墙垛||;2|幕墙||;1|门窗洞|p|;2|门|c|;2|窗||;2|门联窗||;2|墙洞||;2|带形窗||;2|带形洞||;2|飘窗||;2|老虎窗||;2|过梁||;2|壁龛||;1|梁|p|;2|梁|c|;2|连梁||;2|圈梁||;1|板||;2|现浇板||`
      .split(';').map(s => s.split('|'));
    const rows = data.map(([lv, t, a, b], i) => {
      const last = !data[i + 1] || data[i + 1][0] != '2';
      return `<div class="r"><div>${this.lines(+lv, last && +lv == 2, false, '-')}<span>${t}</span></div><div><i class="tick ${a}"></i></div><div><i class="tick ${b}"></i></div></div>`;
    }).join('');
    return `
      <div class="strip">×</div>
      <div class="ptitle">显示设置</div>
      <div class="tabs"><div class="tab on">图元显示</div><div class="tab">楼层显示</div></div>
      <div class="grid">
        <div class="r h"><div>图层构件</div><div>显示图元</div><div>显示名称</div></div>
        ${rows}
        <div class="sb"><i class="u"></i><b></b><i class="d"></i></div>
      </div>
      <div class="foot"><div class="btn">恢复默认设置</div></div>
    `;
  }
}

class GtjStatus extends GtjBase {
  get css() {
    return `
      :host { height: 28px; background: #dcdde0; display: flex; align-items: center; color: #444; white-space: nowrap; }
      .s { display: block; flex: none; padding-top: 2px; }
      .b { height: 25px; flex: none; background: #c9cbce; border: 1px solid #9a9c9f; display: flex; align-items: center; justify-content: center; gap: 4px; color: #444; }
      .b.w { background: #fff; border-color: #3d8fe8; }
      .b i { border: 3px solid transparent; border-top: 4px solid #555; margin-top: 4px; }
      .fps { margin-left: auto; padding: 2px 35px 0 0; }
    `;
  }
  get template() {
    return `
      <span class="s" style="width:207px;margin-left:-3px">X = 173593 Y = 117930</span>
      <span class="s" style="width:78px">层高 : 5.53</span>
      <span class="s" style="width:132px">标高 : -5.65~-0.12</span>
      <span class="s" style="width:104px">1(78)</span>
      <span class="s" style="width:80px">隐藏： 0</span>
      <div class="b" style="width:24px"><svg width="14" height="14" viewBox="0 0 14 14"><path d="M2 1v11h10M2 8h3v4" fill="none" stroke="#333"/></svg></div>
      <div class="b w" style="width:35px;margin-left:4px"><svg width="14" height="18" viewBox="0 0 14 18"><rect x="1.500" y="3.500" width="11" height="13" fill="none" stroke="#3d8fe8"/><rect x="0" y="1" width="5" height="5" fill="#f5a050"/></svg><i></i></div>
      <div class="b" style="width:23px;margin-left:4px"><svg width="14" height="16" viewBox="0 0 14 16"><path d="M1 1l12 14M13 1L1 15" stroke="#888"/></svg></div>
      <div class="b" style="width:36px;margin-left:5px"><svg width="14" height="14" viewBox="0 0 14 14"><path d="M1 12h12M1 12L8 2" stroke="#333" fill="none"/><path d="M5 7l2 3" stroke="#d04030"/></svg><i></i></div>
      <div class="b" style="width:36px;margin-left:4px"><svg width="16" height="14" viewBox="0 0 16 14"><path d="M3 2v6M0 5h6" stroke="#333"/><rect x="7" y="7" width="7" height="5" fill="#333"/></svg><i></i></div>
      <div class="b" style="width:70px;margin-left:3px;padding-top:2px">跨图层选择</div>
      <div class="b" style="width:61px;margin-left:5px;padding-top:2px">折线选择</div>
      <span class="s" style="margin-left:3px;color:#333">按鼠标左键指定第一个角点，或拾取构件图元</span>
      <span class="fps">125 FPS</span>
    `;
  }
}

class GtjFindDialog extends GtjBase {
  get css() {
    return `
      :host { position: absolute; left: 711px; top: 183px; width: 341px; height: 300px; padding: 5px; background: #3d4349; border-radius: 3px; }
      .in { height: 100%; background: #eee; display: flex; flex-direction: column; }
      .strip { height: 11px; flex: none; }
      .ptitle { flex: none; line-height: 24px; }
      .tabs { height: 33px; flex: none; }
      .tab { width: 60px; height: 23px; line-height: 25px; background: #e0e0e0; }
      .tab.on { height: 26px; line-height: 28px; }
      .form { height: 107px; flex: none; border-bottom: 1px solid #c4c6c8; padding: 9px 12px 0 12px; }
      .l1 { display: flex; align-items: center; gap: 5px; height: 25px; }
      .l1 > span { padding-top: 2px; }
      .sel { flex: 1; height: 25px; background: #fff; border: 1px solid #aaa; padding-left: 3px; line-height: 25px; position: relative; }
      .sel::after { content: ""; position: absolute; right: 4px; top: 10px; border: 3px solid transparent; border-top: 4px solid #666; }
      .inp { height: 24px; margin-top: 6px; background: #fff; border: 1px solid #bbb; padding: 0 6px 0 3px; line-height: 24px; display: flex; justify-content: space-between; align-items: center; }
      .l3 { display: flex; align-items: center; margin-top: 6px; height: 27px; }
      .l3 .tick { margin-left: 1px; }
      .l3 span { margin-left: 7px; }
      .b2 { width: 79px; height: 25px; margin-left: 5px; border: 1px solid #c8ccd4; border-radius: 3px; background: #f7f7f7; text-align: center; line-height: 23px; color: #444; }
      .b3 { width: 79px; height: 26px; margin-left: auto; border-radius: 3px; background: #2f80e0; color: #fff; text-align: center; line-height: 26px; }
      .cnt { height: 38px; flex: none; padding: 21px 0 0 11px; color: #222; }
      .tbl { flex: 1; background: linear-gradient(90deg, #eee 33px, #fff 33px); overflow: hidden; }
      .r { display: grid; grid-template-columns: 33px 103px 194px; }
      .r div { border-right: 1px solid #c4c6c8; border-bottom: 1px solid #c4c6c8; padding-left: 3px; }
      .h div { height: 21px; line-height: 20px; text-align: center; background: #eee; color: #444; border-top: 1px solid #c4c6c8; }
      .h div:first-child { background: #fff; border: 0; }
      .d div { height: 26px; line-height: 25px; background: #fff; }
      .d div:first-child { background: #eee; text-align: center; padding: 0; border-right: 0; }
    `;
  }
  get template() {
    return `<div class="in">
      <div class="strip">×</div>
      <div class="ptitle">查找图元</div>
      <div class="tabs"><div class="tab on">快速查找</div><div class="tab">高级查找</div></div>
      <div class="form">
        <div class="l1"><span>构件类型</span><div class="sel">全部</div></div>
        <div class="inp"><span>57593</span><svg width="13" height="13" viewBox="0 0 13 13"><circle cx="5.500" cy="5.500" r="4" fill="none" stroke="#2e8fc8" stroke-width="1.300"/><path d="M8.500 8.500l3.500 3.500" stroke="#2e8fc8" stroke-width="1.500"/></svg></div>
        <div class="l3"><i class="tick c"></i><span>精确匹配</span><div class="b2">选择楼层</div><div class="b3">查找</div></div>
      </div>
      <div class="cnt">共找到 1 个图元</div>
      <div class="tbl">
        <div class="r h"><div></div><div>图元名称</div><div>位置</div></div>
        <div class="r d"><div>1</div><div>LJ-1</div><div>&lt;10-800,E+100&gt;</div></div>
      </div>
    </div>`;
  }
}

class GtjErrRow extends GtjBase {
  get css() {
    return `
      :host { display: grid; grid-template-columns: 25px 30px 192px 56px 273px; height: 20px; line-height: 20px; white-space: nowrap; overflow: hidden; word-spacing: .6px; }
      :host([sel]) { background: #3399ff; color: #fff; }
      svg { margin: 2px 0 0 3px; display: block; }
      div { overflow: hidden; }
    `;
  }
  get template() {
    const err = this.hasAttribute('sel');
    const icon = err
      ? `<svg width="16" height="16" viewBox="0 0 16 16"><rect width="16" height="16" rx="2" fill="#a9cdf0"/><circle cx="8" cy="8" r="7" fill="#c96a86"/><path d="M5 5l6 6M11 5l-6 6" stroke="#fff" stroke-width="2"/></svg>`
      : `<svg width="16" height="16" viewBox="0 0 16 16"><circle cx="8" cy="8" r="7.500" fill="#f28a1e"/><rect x="6.500" y="3" width="3" height="6.500" rx="1.300" fill="#fff"/><circle cx="8" cy="12" r="1.600" fill="#fff"/></svg>`;
    return `${icon}<div>${err ? '错误' : '警告'}</div><div>${this.getAttribute('name')}</div><div>${this.getAttribute('floor')}</div><div><slot></slot></div>`;
  }
}

class GtjErrorDialog extends GtjBase {
  get css() {
    return `
      :host { position: absolute; left: 600px; top: 492px; width: 620px; height: 404px; background: #eee; border: 1px solid #d8dadc; border-top: 0; }
      .tt { height: 27px; background: #2f7fdf; color: #fff; display: flex; align-items: center; padding: 2px 8px 0 9px; }
      .tt span { flex: 1; }
      .tb { position: absolute; left: 13px; top: 38px; width: 595px; height: 354px; border: 1px solid #bbb; background: #fff; overflow: hidden; }
      .h { display: grid; grid-template-columns: 52px 192px 55px 276px; height: 24px; width: 577px; background: #eee; color: #333; }
      .h div { text-align: center; line-height: 26px; border-right: 2px solid #f8f8f8; }
      .thumb { position: absolute; right: 4px; top: 13px; width: 8px; height: 38px; border-radius: 4px; background: #c8c8c8; }
      .rows { width: 577px; padding-top: 1px; }
      .grip { position: absolute; right: 3px; bottom: 3px; width: 8px; height: 8px; background: radial-gradient(#999 1px, transparent 1.200px) 0 0 / 3px 3px; }
    `;
  }
  get template() {
    const id = [
      ['L1(2)', '第32层', 'L1(2) ( ID 为 51278 ) 梁跨未提取'],
      ['L1021(1)', '第32层', 'L1021(1) ( ID 为 51265 ) 梁跨未提取'],
      ['XL1', '第32层', 'XL1 ( ID 为 51276 ) 梁跨未提取'],
      ['XL101(1)', '第32层', 'XL101(1) ( ID 为 51266 ) 梁跨未提取'],
      ['XL101(1)', '第32层', 'XL101(1) ( ID 为 51264 ) 梁跨未提取'],
      ['XL103', '第32层', 'XL103 ( ID 为 51267 ) 梁跨未提取'],
      ['XL106(1)', '第32层', 'XL106(1) ( ID 为 51216 ) 梁跨未提取'],
      ['XL106(1)', '第32层', 'XL106(1) ( ID 为 51220 ) 梁跨未提取'],
      ['XL106(1)', '第32层', 'XL106(1) ( ID 为 51219 ) 梁跨未提取'],
      ['XL106(1)', '第32层', 'XL106(1) ( ID 为 51217 ) 梁跨未提取'],
      ['窗下构造墙节点11b-200', '第4层', '窗下构造墙节点11b-200 ( ID 为 48579 ) 上下...'],
      ['窗下构造墙节点11b-200', '第4层', '窗下构造墙节点11b-200 ( ID 为 48550 ) 上下...'],
      ['窗下构造墙节点11b-200', '第4层', '窗下构造墙节点11b-200 ( ID 为 48549 ) 上下...'],
      ['窗下构造墙节点11b-200', '第4层', '窗下构造墙节点11b-200 ( ID 为 48591 ) 上下...'],
      ['窗下构造墙节点1b-250', '第4层', '窗下构造墙节点1b-250 ( ID 为 48574 ) 上下层...'],
      ['窗下构造墙节点1b-250', '第4层', '窗下构造墙节点1b-250 ( ID 为 48580 ) 上下层...']
    ];
    return `
      <div class="tt"><span>错误 - 双击构件名称选择出错构件</span>
        <svg width="11" height="11" viewBox="0 0 11 11" style="margin-right:18px"><rect x="1" y="1" width="9" height="9" fill="none" stroke="#fff" stroke-width="1.500"/></svg>
        <svg width="11" height="11" viewBox="0 0 11 11"><path d="M1 1l9 9M10 1l-9 9" stroke="#fff" stroke-width="1.500"/></svg>
      </div>
      <div class="tb">
        <div class="h"><div>类型</div><div>构件名称</div><div>所属楼层</div><div>错误描述</div></div>
        <div class="rows">
          <gtj-err-row sel name="LJ-1" floor="第-1层">图形不合法</gtj-err-row>
          ${id.map(([n, f, d]) => `<gtj-err-row name="${n}" floor="${f}">${d}</gtj-err-row>`).join('')}
        </div>
        <div class="thumb"></div>
      </div>
      <div class="grip"></div>
    `;
  }
}

class GtjCloudPanel extends GtjBase {
  get css() {
    return `
      :host { position: absolute; left: 1256px; top: 162px; width: 318px; height: 838px; background: #fff; border: 1px solid #a9c5ea; border-top: 0; }
      .tt { height: 30px; background: linear-gradient(90deg, #2f6fc6, #3f80d8); color: #dfe9f6; display: flex; align-items: center; justify-content: space-between; padding: 0 9px 0 8px; }
      .tabs3 { display: grid; grid-template-columns: 105px 106px 106px; height: 34px; }
      .tabs3 div { text-align: center; line-height: 34px; background: #eee; border-bottom: 1px solid #dcdcdc; border-left: 1px solid #dcdcdc; }
      .tabs3 .on { background: #fff; color: #3d8fe8; border: 0; line-height: 32px; }
      .tools { display: flex; align-items: center; height: 33px; padding: 5px 0 0 8px; color: #444; }
      .tools span { margin: 0 8px 0 6px; }
      .rw { height: 21px; display: flex; align-items: center; position: relative; white-space: nowrap; word-spacing: 1px; }
      .rw svg { display: block; flex: none; }
      .rw b { font-weight: bold; }
      .rw .blue { color: #3d8fe8; font-weight: bold; }
      .doc { position: absolute; left: 297px; top: 0; }
      .tg { position: absolute; left: 265px; top: 2px; }
      .list { padding-top: 1px; }
    `;
  }
  node(lv, kid, text, opts = {}) {
    const w = [23, 33, 43, 53][lv];
    const bx = [4, 14, 24][lv];
    let p = '';
    if (lv == 1) p = `M10 0V${opts.end ? 10.500 : 21}M10 10.500H14`;
    if (lv == 2) p = 'M10 0V21M20 0V10.500M20 10.500H24';
    if (lv == 3) p = 'M10 0V21M30 0V10.500H48';
    if (lv == 0 && kid) p = 'M10 16V21';
    const g = `<svg width="${w}" height="21" viewBox="0 0 ${w} 21"><path d="${p}" fill="none" stroke="#d8d8d8"/>${kid ? box(bx, 4, kid == '+', opts.on) : ''}</svg>`;
    const t = opts.cls ? `<span class="${opts.cls}">${text}</span>` : lv == 0 ? `<b>${text}</b>` : `<span>${text}</span>`;
    const doc = opts.doc ? `<svg class="doc" width="14" height="16" viewBox="0 0 14 16"><path d="M1 1h7l3 3v10H1z" fill="#fff" stroke="#8fb8ea"/><circle cx="10" cy="11" r="3.500" fill="#8fb8ea"/><path d="M8 11h4" stroke="#fff"/></svg>` : '';
    const tg = opts.tg ? `<svg class="tg" width="12" height="12" viewBox="0 0 12 12"><circle cx="6" cy="6" r="4" fill="none" stroke="#8fb8ea"/><circle cx="6" cy="6" r="1.300" fill="#8fb8ea"/><path d="M6 0v2M6 10v2M0 6h2M10 6h2" stroke="#8fb8ea"/></svg>` : '';
    return `<div class="rw">${g}${t}${doc}${tg}</div>`;
  }
  get template() {
    return `
      <div class="tt"><span>云检查结果</span><svg width="11" height="11" viewBox="0 0 11 11"><path d="M1 1l9 9M10 1l-9 9" stroke="#cfe0f5" stroke-width="2"/></svg></div>
      <div class="tabs3"><div class="on">结果列表</div><div>忽略列表</div><div>修复列表</div></div>
      <div class="tools">
        <svg width="12" height="12" viewBox="0 0 12 12"><path d="M10 3.500A4.800 4.800 0 1 0 11 6.500" fill="none" stroke="#3d8fe8" stroke-width="2"/><path d="M11.500 0v5h-5z" fill="#3d8fe8"/></svg><span style="margin-right:21px">刷新</span>
        <svg width="13" height="15" viewBox="0 0 13 15"><rect x=".5" y=".5" width="10" height="12" fill="#eef5fc" stroke="#5b9bd5"/><circle cx="5.500" cy="6" r="2.500" fill="none" stroke="#5b9bd5"/><path d="M9 11l3 3" stroke="#f08a3c" stroke-width="2"/></svg><span style="margin:0 20px 0 5px">依据</span>
        <svg width="16" height="13" viewBox="0 0 16 13"><path d="M4 12a3 3 0 0 1-.5-6A4.500 4.500 0 0 1 12 5a3.500 3.500 0 0 1 0 7z" fill="#cfe0f4" stroke="#5b9bd5"/><circle cx="8" cy="8" r="2" fill="none" stroke="#f08a3c"/></svg><span style="margin-left:3px">重新检查</span>
      </div>
      <div class="list">
        ${this.node(0, '-', '确定错误：7类')}
        ${this.node(1, '-', '图形不合法 ( 共1条 )')}
        ${this.node(2, '-', '第-1层 ( 共1条 )')}
        ${this.node(3, '', '砌体加筋 LJ-1 ( ID：57593 )', { cls: 'blue', tg: 1 })}
        ${this.node(1, '+', '上下层高度不连续 ( 共3条 )', { doc: 1 })}
        ${this.node(1, '+', '构件未配筋 ( 共2条 )', { doc: 1 })}
        ${this.node(1, '+', '柱箍筋间距与规范不符 ( 共2条 )', { doc: 1 })}
        ${this.node(1, '+', '柱纵筋布置过密 ( 共4条 )', { doc: 1, on: 1 })}
        ${this.node(1, '+', '剪力墙底无支撑构件 ( 共21条 )', { doc: 1 })}
        ${this.node(1, '+', '圈梁未封闭 ( 共89条 )', { doc: 1, end: 1 })}
        ${this.node(0, '-', '疑似错误：2类', { doc: 1 })}
        ${this.node(1, '+', '马凳筋遗漏 ( 共77条 )', { doc: 1 })}
        ${this.node(1, '+', '内外墙标志错误 ( 共10条 )', { doc: 1, end: 1 })}
      </div>
    `;
  }
}

class GtjArrows extends GtjBase {
  get css() { return `:host { position: absolute; left: 0; top: 0; width: 1913px; height: 1028px; pointer-events: none; } svg { display: block; }`; }
  get template() {
    return `<svg width="1913" height="1028" viewBox="0 0 1913 1028">
      <path d="M842 366L960 546M1296 334L1012 561" stroke="#f01818" stroke-width="2" fill="none"/>
      <path d="M966 540V554L953 549Z M1007 567L1020 565L1015 553Z" fill="#f01818"/>
    </svg>`;
  }
}

customElements.define('gtj-rib-item', GtjRibItem);
customElements.define('gtj-rib-big', GtjRibBig);
customElements.define('gtj-rib-group', GtjRibGroup);
customElements.define('gtj-err-row', GtjErrRow);
customElements.define('gtj-app', GtjApp);
customElements.define('gtj-titlebar', GtjTitlebar);
customElements.define('gtj-ribbon', GtjRibbon);
customElements.define('gtj-combos', GtjCombos);
customElements.define('gtj-main', GtjMain);
customElements.define('gtj-nav-tree', GtjNavTree);
customElements.define('gtj-mid-panel', GtjMidPanel);
customElements.define('gtj-cad-view', GtjCadView);
customElements.define('gtj-display-panel', GtjDisplayPanel);
customElements.define('gtj-status', GtjStatus);
customElements.define('gtj-find-dialog', GtjFindDialog);
customElements.define('gtj-error-dialog', GtjErrorDialog);
customElements.define('gtj-cloud-panel', GtjCloudPanel);
customElements.define('gtj-arrows', GtjArrows);
</script>
</body>
</html>
